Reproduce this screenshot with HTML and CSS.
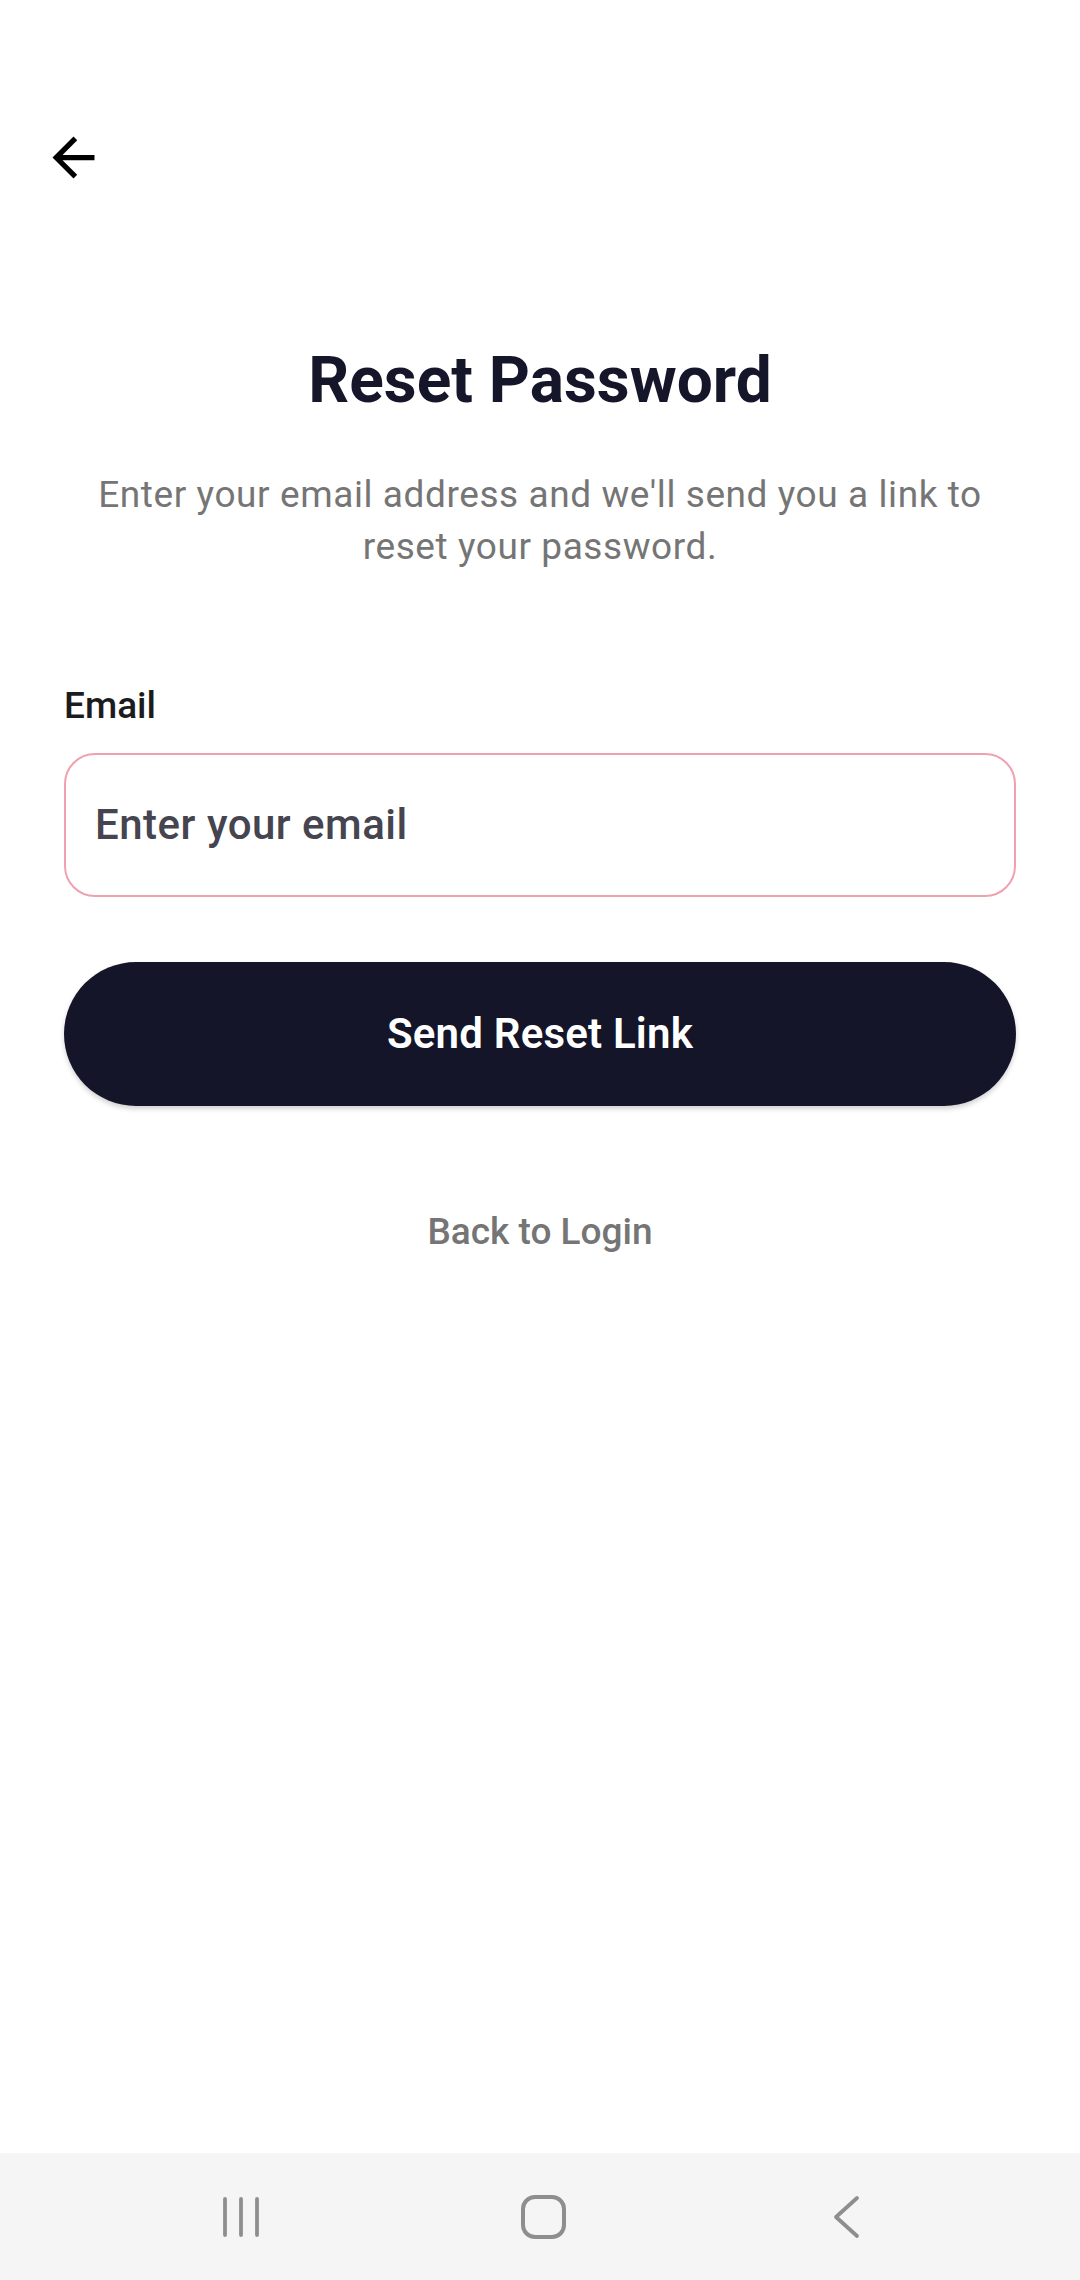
FILE: index.html
```html
<!DOCTYPE html>
<html lang="en">
<head>
<meta charset="utf-8">
<title>Reset Password</title>
<link rel="stylesheet" href="styles.css">
</head>
<body>
<div class="screen">
  <main class="content">
    <header class="topbar">
      <button class="icon-btn" aria-label="Back">
        <svg viewBox="0 0 24 24" width="63" height="63"><path d="M20 11H7.83l5.59-5.59L12 4l-8 8 8 8 1.41-1.41L7.83 13H20v-2z" fill="#000"/></svg>
      </button>
    </header>
    <h1 class="title">Reset Password</h1>
    <p class="subtitle">Enter your email address and we'll send you a link to reset your password.</p>
    <form class="form">
      <label class="label" for="email">Email</label>
      <div class="field">
        <span class="placeholder" id="email">Enter your email</span>
      </div>
      <div class="primary-btn">Send Reset Link</div>
      <div class="link">Back to Login</div>
    </form>
  </main>
  <nav class="navbar">
    <svg class="nav-icon" viewBox="0 0 60 60" width="60" height="60">
      <g stroke="#8e8e8e" stroke-width="3.8" stroke-linecap="round" fill="none">
        <line x1="14" y1="12" x2="14" y2="48"/>
        <line x1="30" y1="12" x2="30" y2="48"/>
        <line x1="46" y1="12" x2="46" y2="48"/>
      </g>
    </svg>
    <svg class="nav-icon" viewBox="0 0 60 60" width="60" height="60">
      <rect x="10" y="10" width="41" height="40" rx="12" ry="12" stroke="#8e8e8e" stroke-width="4" fill="none"/>
    </svg>
    <svg class="nav-icon" viewBox="0 0 60 60" width="60" height="60">
      <polyline points="41,11 20,30 41,49" stroke="#8e8e8e" stroke-width="3.8" stroke-linecap="round" stroke-linejoin="round" fill="none"/>
    </svg>
  </nav>
</div>
</body>
</html>
```

FILE: styles.css
```css
* { box-sizing: border-box; }

html, body {
  margin: 0;
  padding: 0;
  background: #ffffff;
}

body {
  font-family: Roboto, "Noto Sans", "Liberation Sans", sans-serif;
  width: 1080px;
  height: 2280px;
  overflow: hidden;
}

.screen {
  width: 1080px;
  height: 2280px;
  display: flex;
  flex-direction: column;
}

.content {
  flex: 1;
  display: flex;
  flex-direction: column;
  padding: 0 64px;
}

.topbar {
  display: flex;
  padding-top: 126px;
  margin-left: -22px;
  height: 189px;
}

.icon-btn {
  width: 63px;
  height: 63px;
  padding: 0;
  border: none;
  background: none;
  display: block;
}

.icon-btn svg { display: block; }

.title {
  margin: 160px 0 0;
  font-size: 64px;
  line-height: 64px;
  font-weight: 700;
  color: #16162b;
  text-align: center;
}

.subtitle {
  margin: 56px -10px 0;
  font-size: 37px;
  line-height: 52px;
  font-weight: 400;
  color: #757575;
  text-align: center;
  letter-spacing: 0.58px;
}

.form {
  display: flex;
  flex-direction: column;
  margin: 114px 0 0;
}

.label {
  font-size: 37px;
  line-height: 37px;
  font-weight: 500;
  color: #1c1c1e;
}

.field {
  margin-top: 29px;
  height: 144px;
  border: 2px solid #f0a1ae;
  border-radius: 31px;
  display: flex;
  align-items: center;
  padding-left: 29px;
}

.placeholder {
  font-size: 42px;
  line-height: 42px;
  font-weight: 500;
  color: #45444f;
  letter-spacing: 0.5px;
}

.primary-btn {
  margin-top: 65px;
  height: 144px;
  border-radius: 72px;
  background: #151529;
  color: #ffffff;
  display: flex;
  align-items: center;
  justify-content: center;
  font-size: 42px;
  line-height: 42px;
  font-weight: 600;
  letter-spacing: 0.2px;
  box-shadow: 0 3px 5px rgba(0, 0, 0, 0.18);
}

.link {
  margin-top: 107px;
  text-align: center;
  font-size: 37px;
  line-height: 37px;
  font-weight: 500;
  color: #757575;
}

.navbar {
  height: 127px;
  background: #f5f5f5;
  display: flex;
  align-items: center;
  padding: 0 0 0 211px;
}

.navbar .nav-icon { display: block; }

.navbar .nav-icon:nth-child(2) { margin-left: 242px; }
.navbar .nav-icon:nth-child(3) { margin-left: 243px; }
```
